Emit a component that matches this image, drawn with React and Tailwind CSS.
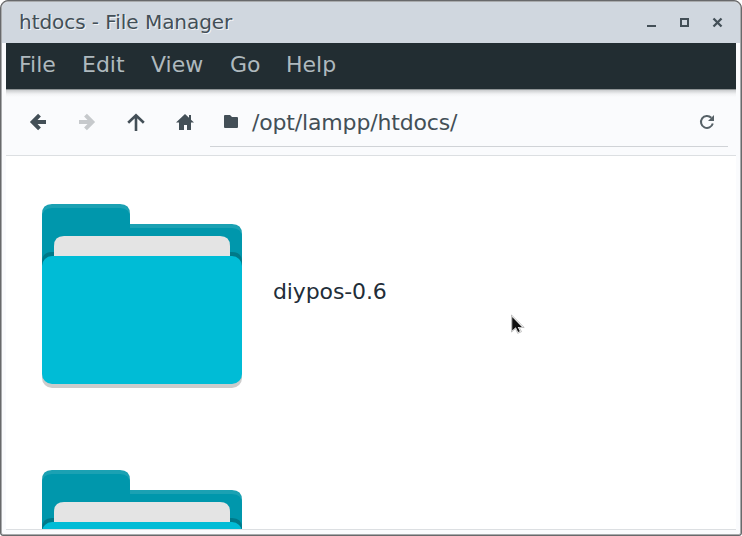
const menuItems = [
  ["File", "w-[63px]"],
  ["Edit", "w-[69px]"],
  ["View", "w-[79px]"],
  ["Go", "w-[56px]"],
  ["Help", "w-[60px]"],
];

function Folder() {
  return (
    <svg width="200" height="184" viewBox="0 0 200 184" className="block shrink-0">
      <path d="M0 10Q0 0 10 0H78Q88 0 88 10V20H190Q200 20 200 30V100H0Z" fill="#1ba1b3" />
      <path d="M0 14Q0 4 10 4H78Q88 4 88 14V24H190Q200 24 200 34V100H0Z" fill="#0097ac" />
      <path d="M0 58Q0 48 10 48H190Q200 48 200 58V100H0Z" fill="#007989" />
      <path d="M12 92V42Q12 32 22 32H178Q188 32 188 42V92Z" fill="#e4e4e4" />
      <rect y="60" width="200" height="124" rx="10" fill="#cccccc" />
      <rect y="52" width="200" height="128" rx="10" fill="#00bcd6" />
    </svg>
  );
}

function Titlebar() {
  return (
    <header className="flex h-[41px] shrink-0 items-center bg-[#d0d7df] pl-[17px] text-[20px] text-[#434f57]">
      <span className="flex-1 pb-[2px] leading-[38px] whitespace-pre tracking-[-0.05px] [text-shadow:1px_1px_0_#ffffffc0]">htdocs - File Manager</span>
      <svg width="100" height="41" viewBox="640 2 100 41" className="shrink-0">
        <path d="M647 26h9" stroke="#434f57" strokeWidth="2" />
        <path d="M681 19h7v7h-7z" stroke="#434f57" strokeWidth="2" fill="none" />
        <path d="M713.5 18.5l8 8M721.5 18.5l-8 8" stroke="#434f57" strokeWidth="2.3" />
      </svg>
    </header>
  );
}

function Toolbar() {
  return (
    <div className="flex h-[67px] shrink-0 border-b border-[#dcdfe2] bg-[linear-gradient(to_bottom,#8f9496_0,#8f9496_1px,#c9cbcd_1px,#f1f2f4_5px,#fafbfd_8px)]">
      <svg width="204" height="66" viewBox="6 89 204 66" className="shrink-0" fill="none" strokeWidth="3.6">
        <path d="M46 122H33M39.5 115.2L32.7 122l6.8 6.8" stroke="#434f57" strokeWidth="4" />
        <path d="M79 122h13M85.5 115.2l6.8 6.8-6.8 6.8" stroke="#c6c9cc" strokeWidth="4" />
        <path d="M136 131v-16M128.2 122.8l7.8-7.6 7.8 7.6" stroke="#434f57" strokeWidth="2.6" />
        <path d="M176 122.6l9-8.6 4 3.8V115h2v4.8l3 2.8h-3v7.4h-4v-5h-3v5h-5v-7.4z" fill="#434f57" />
      </svg>
      <div className="flex h-[58px] w-[518px] items-center border-b border-[#d0d3d7] pt-[8px]">
        <svg width="42" height="50" viewBox="210 97 42 50" className="shrink-0">
          <path d="M224 116q0-1 1-1h5l2 2h5q1 0 1 1v9q0 1-1 1h-12q-1 0-1-1z" fill="#434f57" />
        </svg>
        <span className="flex-1 pt-[2px] text-[22px] leading-[50px] tracking-[-0.16px] text-[#434f57]">/opt/lampp/htdocs/</span>
        <svg width="30" height="50" viewBox="698 97 30 50" className="shrink-0">
          <path d="M711.3 117.7A6 6 0 1 0 712.8 123.5" fill="none" stroke="#566167" strokeWidth="2" />
          <path d="M714 115v6h-6z" fill="#566167" />
        </svg>
      </div>
    </div>
  );
}

export default function App() {
  return (
    <div className="h-[536px] w-[742px] bg-white font-['DejaVu_Sans',sans-serif]">
      <div className="relative h-[536px] w-[742px] overflow-hidden rounded-t-[8px] rounded-b-[3px] border border-[#68696b] bg-[#68696b]">
        <div className="flex h-[534px] flex-col overflow-hidden rounded-t-[7px] rounded-b-[2px] border border-[#a9abad] bg-[#fafbfd]">
          <Titlebar />
          <main className="mx-[4px] flex h-[487px] flex-col border-b border-[#dcdfe2] bg-white">
            <nav className="flex h-[46px] shrink-0 bg-[#222d32] pl-[13px] text-[22px] leading-[43px] text-[#afb9be]">
              {menuItems.map(([label, width]) => (
                <span key={label} className={width}>{label}</span>
              ))}
            </nav>
            <Toolbar />
            <div className="flex min-h-0 flex-1 flex-col gap-[82px] overflow-hidden pt-[48px] pl-[36px]">
              <div className="flex h-[184px] shrink-0 gap-[31px]">
                <Folder />
                <span className="pt-[74px] text-[22px] leading-[28px] tracking-[-0.12px] text-[#222d38]">diypos-0.6</span>
              </div>
              <Folder />
            </div>
          </main>
        </div>
        <svg className="absolute top-[313px] left-[509px]" width="16" height="22" viewBox="0 0 16 22">
          <path d="M1.5 1v17l4-3.5 2.2 4.8 3.8-1.6-2.3-4.2h5z" fill="#fff" stroke="#b0b0b0" strokeWidth="0.8" />
          <path d="M2.2 3v13.4l3.6-3.1 2.3 4.7 1.8-.8-2.2-4.3h4.2z" fill="#111" />
        </svg>
      </div>
    </div>
  );
}
